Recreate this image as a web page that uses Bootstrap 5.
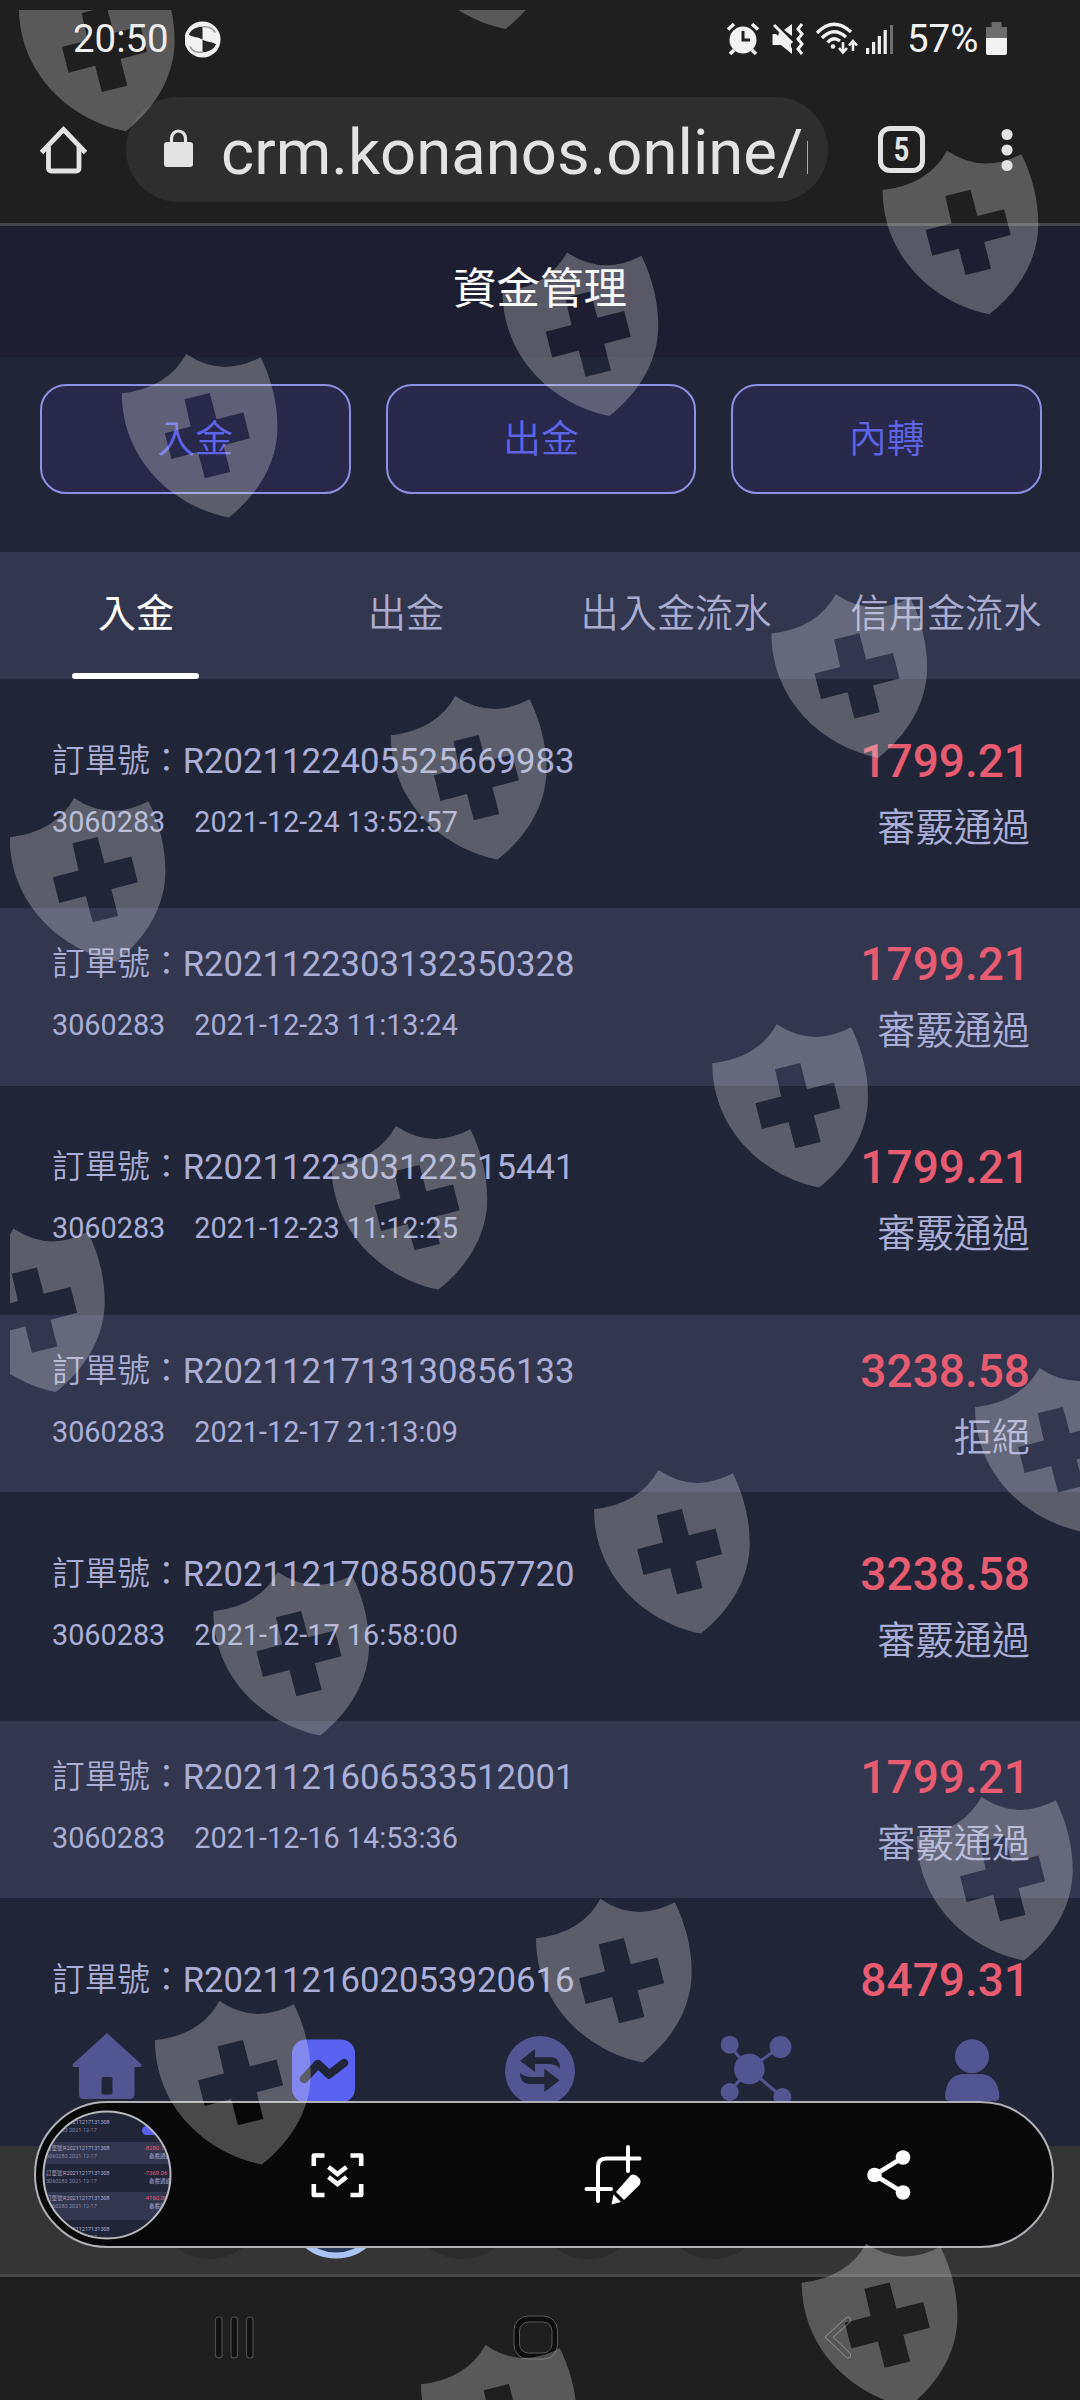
<!DOCTYPE html>
<html lang="zh-Hant">
<head>
    <meta charset="UTF-8">
    <meta name="viewport" content="width=device-width, initial-scale=1.0">
    <title>資金管理</title>
    <link rel="stylesheet" href="https://cdn.jsdelivr.net/npm/bootstrap@5.3.0/dist/css/bootstrap.min.css">
    <style>
        body {
            background-color: #1f1f1f;
            font-family: Roboto, "Noto Sans CJK TC", sans-serif;
            line-height: 1;
        }

        svg {
            display: block;
            flex-shrink: 0;
        }

        .phone {
            width: 1080px;
            height: 2400px;
            background-color: #1f1f1f;
        }

        /* Barra de status */
        .status-bar {
            height: 78px;
            padding: 0 73px 0 73px;
            font-size: 38.4px;
            color: #f2f2f2;
        }

        .battery-text {
            width: 79px;
            margin-left: 14px;
        }

        /* Barra do navegador */
        .browser-bar {
            height: 148px;
            padding: 19px 67px 0 40px;
            border-bottom: 3px solid #47474b;
        }

        .bar-item {
            height: 105px;
        }

        .url-box {
            width: 702px;
            height: 105px;
            margin-left: 39px;
            padding: 0 20px 0 38px;
            background-color: #2e2e2e;
            border-radius: 53px;
        }

        .url-text {
            margin-left: 28px;
            padding-top: 4px;
            font-size: 63.4px;
            line-height: 90px;
            color: #e3e3e3;
            width: 587px;
        }

        .tab-count {
            width: 47px;
            height: 47px;
            margin-left: 50px;
            border: 5px solid #e3e3e3;
            border-radius: 12px;
            font-size: 33px;
            font-weight: 700;
            color: #e3e3e3;
        }

        .tab-count span {
            transform: scaleX(0.82);
        }

        /* Página */
        .fund-page {
            height: 1920px;
            background-color: #212538;
        }

        .page-title {
            height: 131px;
            padding-bottom: 4px;
            background-color: #1d1e31;
            color: #fff;
            font-size: 43.5px;
        }

        .fund-actions {
            padding: 27px 38px 58px 40px;
            gap: 35px;
        }

        .fund-btn {
            height: 110px;
            border: 2px solid #8b90e0;
            border-radius: 26px;
            background-color: #27284a;
            color: #5e64e6;
            font-size: 38px;
            font-weight: 350;
            line-height: 1;
        }

        .fund-tabs {
            height: 127px;
            background-color: #32364f;
            font-size: 38.2px;
            font-weight: 350;
            color: #a9abcf;
        }

        .fund-tab {
            width: 270px;
            padding: 0 0 2px 2px;
        }

        .fund-tab.active {
            color: #fff;
            font-weight: 400;
        }

        .fund-tab.active::after {
            content: "";
            position: absolute;
            bottom: 0;
            left: 72px;
            width: 127px;
            height: 6px;
            border-radius: 3px;
            background-color: #fff;
        }

        .order-list {
            padding-top: 26px;
        }

        .order-row {
            height: 177.4px;
            margin-bottom: 25.8px;
            padding: 37px 50px 0 52px;
            color: #abaed6;
        }

        .order-row:nth-child(even) {
            background-color: #32364f;
        }

        .order-label {
            font-size: 32.7px;
            font-weight: 350;
        }

        .order-no {
            font-size: 34.7px;
            line-height: 38px;
        }

        .order-info {
            margin-top: 26px;
            font-size: 28.8px;
            line-height: 32px;
        }

        .order-date {
            margin-left: 29px;
        }

        .order-amount {
            font-size: 46px;
            font-weight: 500;
            line-height: 38px;
            color: #e85c72;
        }

        .order-status {
            margin-top: 29px;
            font-size: 38.2px;
            font-weight: 350;
            line-height: 38px;
        }

        /* Menu inferior, por cima da lista */
        .bottom-menu {
            position: absolute;
            left: 0;
            top: 2018px;
            width: 1080px;
            height: 128px;
            padding-top: 14px;
            background-color: #212538;
        }

        .bottom-menu > div {
            width: 216px;
        }

        .tab-group-bar {
            height: 131px;
            background-color: #353535;
            border-bottom: 3px solid #484848;
        }

        .system-nav {
            height: 123px;
            padding: 38px 0 0 214px;
        }

        .home-key {
            margin-left: 257px;
        }

        .back-key {
            margin-left: 264px;
        }

        /* Barra de captura */
        .capture-bar {
            position: absolute;
            left: 34px;
            top: 2101px;
            width: 1020px;
            height: 147px;
            border: 2px solid #b1b2b8;
            border-radius: 74px;
            background-color: #080808;
            padding-left: 5px;
        }

        .scroll-icon {
            margin-left: 138px;
        }

        .crop-icon {
            margin-left: 219px;
        }

        .share-icon {
            margin-left: 224px;
        }

        .shield-layer {
            position: absolute;
            left: 0;
            top: 0;
            pointer-events: none;
        }
    </style>
</head>
<body>
    <div class="phone position-relative overflow-hidden mx-auto">
        <!-- Status -->
        <div class="status-bar d-flex align-items-center">
            <span>20:50</span>
            <svg class="ms-3" width="37" height="37" viewBox="0 0 38 38">
                <circle cx="18" cy="19" r="18.500" fill="#f2f2f2"/>
                <path d="M4 14 C7 8 12 6 18 6 V19 C14 16 8 17 4 14Z M32 24 C29 30 24 32 18 32 V19 C22 22 28 21 32 24Z" fill="#262626"/>
                <path d="M18 6 C25 5 29 8 31 12 M18 32 C11 33 7 30 5 26" fill="none" stroke="#999" stroke-width="1.500"/>
            </svg>
            <svg class="ms-auto" width="162" height="36" viewBox="727 20 162 36" fill="#f2f2f2" stroke="none">
                <!-- Alarme -->
                <circle cx="744" cy="39" r="13.500"/>
                <path d="M729 28.500 L735 23 M759 28.500 L753 23 M735 49 L731 53 M753 49 L757 53" stroke="#f2f2f2" stroke-width="3.600"/>
                <path d="M744 30 V39 H751" fill="none" stroke="#1f1f1f" stroke-width="3"/>
                <!-- Silencioso -->
                <path d="M773.500 33 H777 L793 47 V53 L782 44 H773.500Z M785 29 L793 23 V35Z"/>
                <path d="M775 24 L793 42" stroke="#f2f2f2" stroke-width="3"/>
                <path d="M780 31 L792 42 V49 L778 40Z"/>
                <path d="M803 23 L799 28 L803 33 L799 38 L803 43 L799 48 L803 53" fill="none" stroke="#f2f2f2" stroke-width="3"/>
                <!-- Wi-Fi -->
                <g fill="none" stroke="#f2f2f2" stroke-width="3.300">
                    <path d="M818 32 Q834.500 15 852 31"/>
                    <path d="M823 37 Q834.500 25 847 36"/>
                    <path d="M828.500 41.500 Q834.500 35 841 40"/>
                    <path d="M844 41 V51 M840 47 L844 51.500 L848 47 M854 50 V41 M850 44.500 L854 40 L858 44.500" stroke-width="2.600"/>
                </g>
                <circle cx="834" cy="45.500" r="2.300"/>
                <path d="M867 47 h3.200 v6 h-3.200z M873 41 h3.200 v12 h-3.200z M878.700 35 h3.200 v18 h-3.200z M884.600 29 h3.200 v24 h-3.200z"/>
            </svg>
            <svg width="5" height="36" viewBox="0 0 5 36"><path d="M2 4 h3 v29 h-3z" fill="#6d6d6d"/></svg>
            <span class="battery-text text-nowrap">57%</span>
            <svg width="21" height="36" viewBox="0 0 21 36">
                <path d="M5.500 1 h10 v5 h5.500 v12 h-21 v-12 h5.500z" fill="#6d6d6d"/>
                <path d="M0 17 h21 v15 q0 2 -2 2 h-17 q-2 0 -2 -2z" fill="#f2f2f2"/>
            </svg>
        </div>

        <!-- Navegador -->
        <div class="browser-bar d-flex align-items-start">
            <div class="bar-item d-flex align-items-center">
                <svg width="47" height="48" viewBox="0 0 47 48" fill="none" stroke="#e3e3e3" stroke-width="4.800">
                    <path d="M1.500 26.500 L23.500 3.500 L45.500 26.500"/>
                    <path d="M8.500 21 V42 Q8.500 45 11.500 45 H36 Q39 45 39 42 V21"/>
                </svg>
            </div>
            <div class="url-box d-flex align-items-center overflow-hidden">
                <svg class="mb-1" width="29" height="38" viewBox="0 0 29 38">
                    <rect x="0" y="13" width="29" height="25" rx="3" fill="#e3e3e3"/>
                    <path d="M7.500 14 V9.500 a7 7.500 0 0 1 14 0 V14" fill="none" stroke="#e3e3e3" stroke-width="3.200"/>
                </svg>
                <div class="url-text overflow-hidden text-nowrap">crm.konanos.online/r</div>
            </div>
            <div class="bar-item d-flex align-items-center flex-fill">
                <div class="tab-count d-flex align-items-center justify-content-center"><span>5</span></div>
                <svg class="ms-auto" width="12" height="46" viewBox="0 0 12 46" fill="#e3e3e3">
                    <circle cx="6" cy="7.500" r="5.600"/>
                    <circle cx="6" cy="23" r="5.600"/>
                    <circle cx="6" cy="38.500" r="5.600"/>
                </svg>
            </div>
        </div>

        <!-- Página -->
        <div class="fund-page overflow-hidden">
            <div class="page-title d-flex align-items-center justify-content-center">資金管理</div>
            <div class="fund-actions d-flex">
                <button type="button" class="btn fund-btn flex-fill">入金</button>
                <button type="button" class="btn fund-btn flex-fill">出金</button>
                <button type="button" class="btn fund-btn flex-fill">內轉</button>
            </div>
            <div class="fund-tabs d-flex">
                <div class="fund-tab active position-relative d-flex align-items-center justify-content-center">入金</div>
                <div class="fund-tab d-flex align-items-center justify-content-center">出金</div>
                <div class="fund-tab d-flex align-items-center justify-content-center">出入金流水</div>
                <div class="fund-tab d-flex align-items-center justify-content-center">信用金流水</div>
            </div>
            <div class="order-list" id="orderList"></div>
        </div>

        <div class="tab-group-bar">
            <svg width="1080" height="128" viewBox="0 1 1080 128">
                <g fill="#2c2c2c">
                    <circle cx="210" cy="61" r="53"/>
                    <circle cx="462" cy="61" r="53"/>
                    <circle cx="588" cy="61" r="53"/>
                    <circle cx="713" cy="61" r="53"/>
                </g>
                <circle cx="336" cy="64" r="46.500" fill="#26365a" stroke="#a9c4f2" stroke-width="6"/>
            </svg>
        </div>

        <!-- Botões do sistema -->
        <div class="system-nav d-flex">
            <svg width="42" height="46" viewBox="0 0 42 46" fill="#111" stroke="#4c4c4c" stroke-width="1.200">
                <rect x="1.500" y="2" width="6.500" height="41" rx="3"/>
                <rect x="17" y="2" width="6.500" height="41" rx="3"/>
                <rect x="32.500" y="2" width="6.500" height="41" rx="3"/>
            </svg>
            <svg class="home-key" width="46" height="46" viewBox="0 0 46 46" stroke="#5a5a5a" stroke-width="1">
                <rect x="1" y="1" width="43.500" height="43" rx="14" fill="#0d0d0d"/>
                <rect x="6.500" y="7" width="32.500" height="31" rx="9" fill="#1f1f1f"/>
            </svg>
            <svg class="back-key" width="28" height="46" viewBox="0 0 28 46" fill="none" stroke-linecap="round">
                <path d="M25 5 L6 22 L25 40" stroke="#666" stroke-width="6.500"/>
                <path d="M25 5 L6 22 L25 40" stroke="#1a1a1a" stroke-width="4.500"/>
            </svg>
        </div>

        <!-- Menu inferior -->
        <div class="bottom-menu d-flex">
            <div class="d-flex justify-content-center">
                <svg width="72" height="70" viewBox="0 0 72 70">
                    <path d="M35 1 L69 32 Q71 35 67 35 H62.500 V62 Q62.500 67 57.500 67 H12 Q7 67 7 62 V35 H3 Q-1 35 1 32Z" fill="#515692"/>
                    <rect x="29.500" y="45" width="11" height="17.500" rx="2" fill="#212538"/>
                </svg>
            </div>
            <div class="d-flex justify-content-center">
                <svg width="64" height="72" viewBox="0 0 64 72">
                    <rect x="0" y="7.500" width="63" height="63" rx="14" fill="#5a62f2"/>
                    <path d="M12 47 L26 32 L37 42.500 L52 31" fill="none" stroke="#212538" stroke-width="8.500" stroke-linecap="round" stroke-linejoin="round"/>
                </svg>
            </div>
            <div class="d-flex justify-content-center">
                <svg width="70" height="75" viewBox="0 0 70 75">
                    <circle cx="35" cy="39" r="35" fill="#515692"/>
                    <path d="M15 28.700 L30 17 V25.300 H47 Q55 26 55 36.500 Q51 32 43 32 H30 V40Z M54.700 48.300 L39.300 60 V52 H24 Q15 51 15 40.700 Q19 45 27 45 H39.300 V36.700Z" fill="#212538"/>
                </svg>
            </div>
            <div class="d-flex justify-content-center">
                <svg width="72" height="75" viewBox="0 0 72 75" fill="#515692" stroke="#515692">
                    <path d="M9.500 13 L29 37 L60 15 M29 37 L9.500 60 M29 37 L62 65" fill="none" stroke-width="3"/>
                    <g stroke="none">
                        <circle cx="9.700" cy="12.700" r="9"/>
                        <circle cx="60.500" cy="15" r="11"/>
                        <circle cx="29.400" cy="37" r="15.300"/>
                        <circle cx="9.700" cy="60" r="9"/>
                        <circle cx="62.400" cy="65" r="9"/>
                    </g>
                </svg>
            </div>
            <div class="d-flex justify-content-center">
                <svg width="56" height="72" viewBox="0 0 56 72" fill="#515692">
                    <circle cx="28" cy="24.300" r="17"/>
                    <path d="M1 65 Q2 42 21 42 H35 Q54 42 55.500 65 Q55 69 50 69 H6 Q1 69 1 65Z"/>
                </svg>
            </div>
        </div>

        <!-- Barra de captura -->
        <div class="capture-bar d-flex align-items-center">
            <svg width="132" height="132" viewBox="0 0 132 132">
                <defs>
                    <clipPath id="previewClip"><circle cx="66" cy="66" r="63.500"/></clipPath>
                </defs>
                <g clip-path="url(#previewClip)">
                    <rect width="132" height="132" fill="#212538"/>
                    <rect y="33" width="132" height="22" fill="#32364f"/>
                    <rect y="83" width="132" height="28" fill="#32364f"/>
                    <rect x="101" y="17" width="40" height="9" rx="4.500" fill="#5a62f2"/>
                    <g id="previewText" font-size="5.500" fill="#a9abcf"></g>
                </g>
                <circle cx="66" cy="66" r="63.500" fill="none" stroke="#b9bac0" stroke-width="2"/>
            </svg>
            <svg class="scroll-icon" width="54" height="60" viewBox="0 0 54 60" fill="none" stroke="#fff" stroke-width="4.600">
                <path d="M2.800 21 V10.500 H13.500 M39.500 10.500 H50.200 V21 M50.200 39 V50 H39.500 M13.500 50 H2.800 V39" stroke-linejoin="round"/>
                <path d="M17.500 22 L26.500 29 L35.500 22 M17.500 32 L26.500 39 L35.500 32"/>
            </svg>
            <svg class="crop-icon" width="58" height="62" viewBox="0 0 58 62">
                <path d="M44 3 V27 M55.500 14.500 H22 Q14 14.500 14 22.500 V57 M2.500 45 H27" fill="none" stroke="#fff" stroke-width="4" stroke-linecap="round"/>
                <path d="M32 48 L47 31 Q50 29.500 53 32 L56 35 Q57.500 38 55.500 41 L40 56Z" fill="#fff"/>
                <path d="M29.500 50.500 L37 58 L27.500 60.500Z" fill="#fff"/>
            </svg>
            <svg class="share-icon" width="46" height="54" viewBox="0 0 46 54" fill="#fff">
                <path d="M37 9.500 L8.500 27 L37 44.500" fill="none" stroke="#fff" stroke-width="4.600"/>
                <circle cx="8.500" cy="27" r="7.300"/>
                <circle cx="37" cy="9.500" r="7.300"/>
                <circle cx="37" cy="44.500" r="7.300"/>
            </svg>
        </div>

        <svg class="shield-layer" width="1080" height="2400" viewBox="0 0 1080 2400">
            <defs>
                <path id="shield" fill-rule="evenodd" d="M0 39.300 Q46 34 64.400 0 Q100 24 138.800 3.300 C150 26 155.700 50 155.700 73 C155.700 107 138 139 106.800 163.600 C50 152 0 105 0 39.300Z M62.700 45.300 L87.900 39 L94.800 65.300 L121.600 58.600 L128.100 84.300 L101.600 91.300 L108.400 118 L83 124.300 L76.200 98 L49.600 105 L43.100 79.300 L68.900 72.600Z"/>
                <clipPath id="shieldClip"><rect x="10" y="10" width="1070" height="2390"/></clipPath>
            </defs>
            <g id="shields" fill="#e0e0e0" fill-opacity="0.300" clip-path="url(#shieldClip)"></g>
        </svg>
    </div>

    <script src="https://cdn.jsdelivr.net/npm/bootstrap@5.3.0/dist/js/bootstrap.bundle.min.js"></script>
    <script>
        const orders = [
            { no: 'R2021122405525669983', date: '2021-12-24 13:52:57', amount: '1799.21', status: '審覈通過' },
            { no: 'R2021122303132350328', date: '2021-12-23 11:13:24', amount: '1799.21', status: '審覈通過' },
            { no: 'R2021122303122515441', date: '2021-12-23 11:12:25', amount: '1799.21', status: '審覈通過' },
            { no: 'R2021121713130856133', date: '2021-12-17 21:13:09', amount: '3238.58', status: '拒絕' },
            { no: 'R2021121708580057720', date: '2021-12-17 16:58:00', amount: '3238.58', status: '審覈通過' },
            { no: 'R2021121606533512001', date: '2021-12-16 14:53:36', amount: '1799.21', status: '審覈通過' },
            { no: 'R2021121602053920616', date: '', amount: '8479.31', status: '' }
        ];

        const shieldSpots = [
            [18.9, -32.3], [398.7, -134.6], [882.6, 150.7], [502.6, 252.4], [121.8, 354],
            [771.4, 594.3], [390.8, 696], [9.7, 798], [712.3, 1024], [331.5, 1126],
            [-51, 1228.5], [975, 1368], [594, 1470], [213.3, 1572], [917, 1797],
            [536, 1899], [155, 2001], [801.7, 2243.5], [421, 2345]
        ];

        const orderList = document.getElementById('orderList');
        const shields = document.getElementById('shields');
        const previewText = document.getElementById('previewText');

        function renderOrders() {
            orders.forEach(order => {
                const info = order.date ? `<span>3060283</span><span class="order-date">${order.date}</span>` : '';
                orderList.innerHTML += `<div class="order-row d-flex justify-content-between">
                    <div>
                        <div class="order-no d-flex"><span class="order-label">訂單號：</span><span>${order.no}</span></div>
                        <div class="order-info d-flex">${info}</div>
                    </div>
                    <div class="text-end">
                        <div class="order-amount">${order.amount}</div>
                        <div class="order-status">${order.status}</div>
                    </div>
                </div>`;
            });
        }

        function renderShields() {
            shields.innerHTML = shieldSpots.map(([x, y]) => `<use href="#shield" x="${x}" y="${y}"/>`).join('');
        }

        // Miniatura da lista dentro do círculo
        function renderPreview() {
            const lines = [[15, ''], [41, '-8280.71'], [66, '-7369.06'], [91, '-4160.00'], [122, '']];
            previewText.innerHTML = lines.map(([y, amount]) => `
                <text x="5" y="${y}">訂單號</text>
                <text x="22" y="${y}">R20211217131308</text>
                <text x="5" y="${y + 8}" opacity="0.7">3060283 2021-12-17</text>
                <text x="103" y="${y}" font-size="6" fill="#e85c72">${amount}</text>
                <text x="108" y="${y + 8}">${amount ? '審覈通過' : ''}</text>`).join('');
        }

        renderOrders();
        renderShields();
        renderPreview();
    </script>
</body>
</html>
